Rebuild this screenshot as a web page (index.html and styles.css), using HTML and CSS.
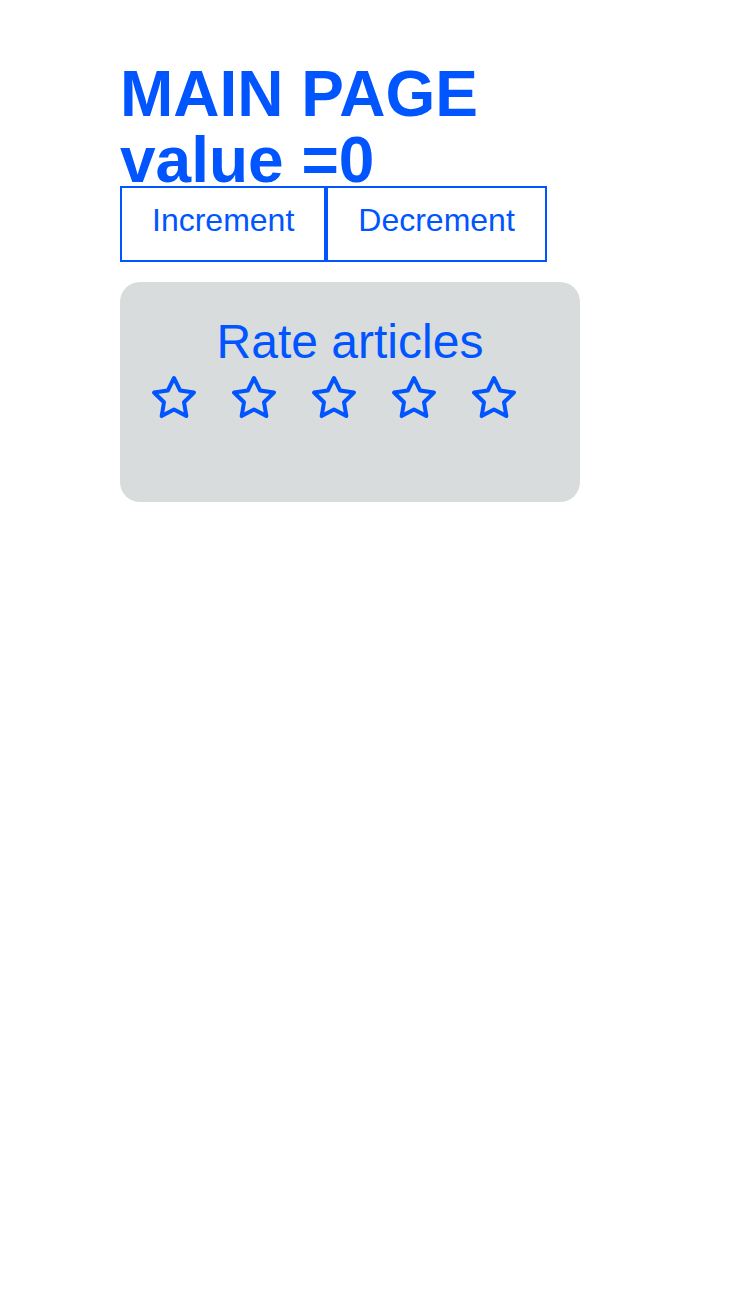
FILE: index.html
```html
<!DOCTYPE html>
<html>
<head>
<meta charset="utf-8">
<link rel="stylesheet" href="styles.css">
</head>
<body>
<div class="page">
  <h1 class="title">MAIN PAGE<br>value =0</h1>
  <div class="buttons">
    <button class="btn">Increment</button>
    <button class="btn">Decrement</button>
  </div>
  <div class="card">
    <div class="card-title">Rate articles</div>
    <div class="stars">
      <svg class="star" viewBox="0 0 24 24"><polygon points="12 2 15.09 8.26 22 9.27 17 14.14 18.18 21.02 12 17.77 5.82 21.02 7 14.14 2 9.27 8.91 8.26 12 2"/></svg>
      <svg class="star" viewBox="0 0 24 24"><polygon points="12 2 15.09 8.26 22 9.27 17 14.14 18.18 21.02 12 17.77 5.82 21.02 7 14.14 2 9.27 8.91 8.26 12 2"/></svg>
      <svg class="star" viewBox="0 0 24 24"><polygon points="12 2 15.09 8.26 22 9.27 17 14.14 18.18 21.02 12 17.77 5.82 21.02 7 14.14 2 9.27 8.91 8.26 12 2"/></svg>
      <svg class="star" viewBox="0 0 24 24"><polygon points="12 2 15.09 8.26 22 9.27 17 14.14 18.18 21.02 12 17.77 5.82 21.02 7 14.14 2 9.27 8.91 8.26 12 2"/></svg>
      <svg class="star" viewBox="0 0 24 24"><polygon points="12 2 15.09 8.26 22 9.27 17 14.14 18.18 21.02 12 17.77 5.82 21.02 7 14.14 2 9.27 8.91 8.26 12 2"/></svg>
    </div>
  </div>
</div>
</body>
</html>
```

FILE: styles.css
```css
html, body {
  margin: 0;
  padding: 0;
  background: #ffffff;
}
.page {
  padding: 61px 0 0 120px;
  font-family: "Liberation Sans", Arial, sans-serif;
  color: #0055ff;
}
.title {
  margin: 0 0 -7px 0;
  font-size: 64px;
  line-height: 66px;
  font-weight: bold;
  color: #0055ff;
}
.buttons {
  display: flex;
  position: relative;
}
.btn {
  font-family: "Liberation Sans", Arial, sans-serif;
  font-size: 32px;
  line-height: 37px;
  color: #0055ff;
  background: #ffffff;
  border: 2px solid #0055ff;
  border-radius: 0;
  padding: 14px 30px 21px 30px;
  margin: 0;
}
.card {
  margin-top: 20px;
  width: 460px;
  height: 220px;
  box-sizing: border-box;
  background: #d9dcdd;
  border-radius: 20px;
  padding: 32px 30px;
}
.card-title {
  text-align: center;
  font-size: 48px;
  line-height: 55px;
}
.stars {
  display: flex;
  gap: 32px;
  margin-top: 5px;
}
.star {
  width: 48px;
  height: 48px;
  fill: none;
  stroke: #0055ff;
  stroke-width: 2;
  stroke-linejoin: round;
  stroke-linecap: round;
}
```
